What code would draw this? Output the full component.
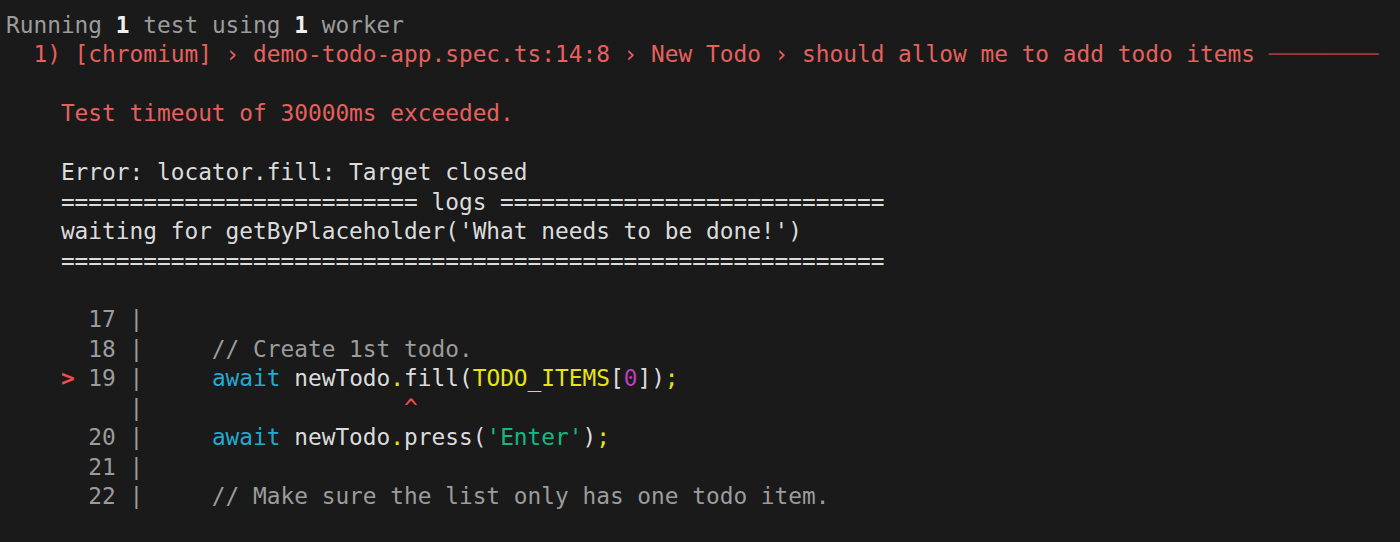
import React from "react";

const red = "text-[#e8605e]";
const bright = "text-[#f14c4c]";
const fg = "text-[#dcdcdc]";
const dim = "text-[#9c9c9c]";
const cyan = "text-[#23a9cf]";
const yellow = "text-[#e5e510]";

function Line({ children }: { children?: React.ReactNode }) {
  return <div className="h-[29.44px] leading-[29.44px] whitespace-pre">{children ?? " "}</div>;
}

export default function App() {
  const eqA = "=".repeat(26);
  const eqB = "=".repeat(28);
  const eqC = "=".repeat(60);

  return (
    <div
      className="w-[1400px] h-[542px] bg-[#1a1a1a] pt-[11px] pl-[6px] text-[22.8px] overflow-hidden"
      style={{ fontFamily: '"DejaVu Sans Mono", "Liberation Mono", monospace' }}
    >
      <Line>
        <span className={dim}>Running </span>
        <span className="text-[#f0f0f0] font-bold">1</span>
        <span className={dim}> test using </span>
        <span className="text-[#f0f0f0] font-bold">1</span>
        <span className={dim}> worker</span>
      </Line>
      <Line>
        <span className={red}>
          {"  1) [chromium] › demo-todo-app.spec.ts:14:8 › New Todo › should allow me to add todo items "}
        </span>
        <span className="text-[#9e3b3b]">{"────────"}</span>
      </Line>
      <Line />
      <Line>
        <span className={red}>{"    Test timeout of 30000ms exceeded."}</span>
      </Line>
      <Line />
      <Line>
        <span className={fg}>{"    Error: locator.fill: Target closed"}</span>
      </Line>
      <Line>
        <span className={fg}>{`    ${eqA} logs ${eqB}`}</span>
      </Line>
      <Line>
        <span className={fg}>{"    waiting for getByPlaceholder('What needs to be done!')"}</span>
      </Line>
      <Line>
        <span className={fg}>{`    ${eqC}`}</span>
      </Line>
      <Line />
      <Line>
        <span className={dim}>{"      17 |"}</span>
      </Line>
      <Line>
        <span className={dim}>{"      18 |     // Create 1st todo."}</span>
      </Line>
      <Line>
        <span className={`${bright} font-bold`}>{"    > "}</span>
        <span className={dim}>{"19 |     "}</span>
        <span className={cyan}>await</span>
        <span className={fg}> newTodo</span>
        <span className={yellow}>.</span>
        <span className={fg}>fill(</span>
        <span className={yellow}>TODO_ITEMS</span>
        <span className={fg}>[</span>
        <span className="text-[#bc3fbc]">0</span>
        <span className={fg}>])</span>
        <span className={yellow}>;</span>
      </Line>
      <Line>
        <span className={dim}>{"         |"}</span>
        <span className={bright}>{"                   ^"}</span>
      </Line>
      <Line>
        <span className={dim}>{"      20 |     "}</span>
        <span className={cyan}>await</span>
        <span className={fg}> newTodo</span>
        <span className={yellow}>.</span>
        <span className={fg}>press(</span>
        <span className="text-[#13b883]">'Enter'</span>
        <span className={fg}>)</span>
        <span className={yellow}>;</span>
      </Line>
      <Line>
        <span className={dim}>{"      21 |"}</span>
      </Line>
      <Line>
        <span className={dim}>{"      22 |     // Make sure the list only has one todo item."}</span>
      </Line>
    </div>
  );
}
